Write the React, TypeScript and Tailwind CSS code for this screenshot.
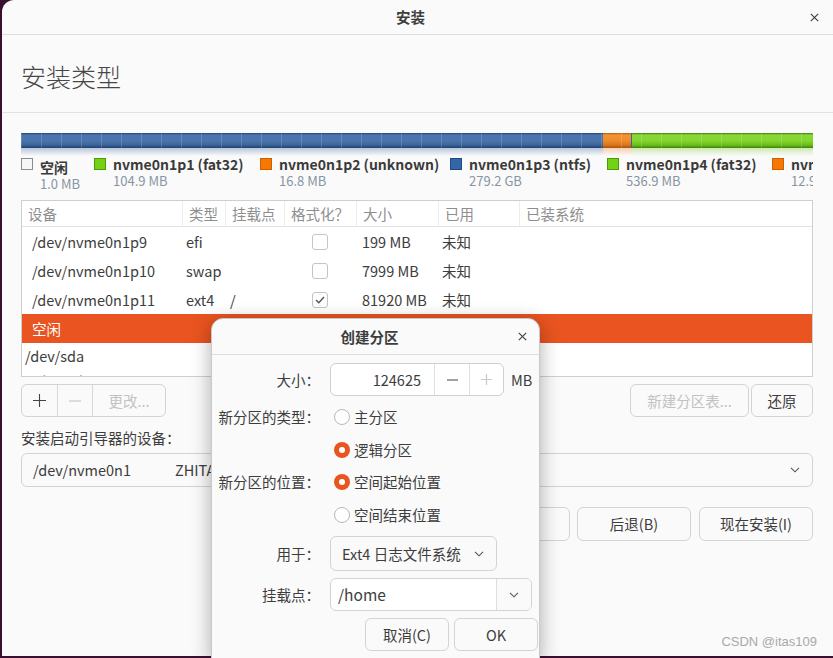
import React from 'react';

const legend = [
  { name: '空闲', size: '1.0 MB', box: 'bg-[#f6f6f6] border-[#8c8c8c]', w: 'w-[73px]', cjk: true },
  { name: 'nvme0n1p1 (fat32)', size: '104.9 MB', box: 'bg-[#73d216] border-[#4e9a06]', w: 'w-[166px]' },
  { name: 'nvme0n1p2 (unknown)', size: '16.8 MB', box: 'bg-[#f57900] border-[#ce5c00]', w: 'w-[190px]' },
  { name: 'nvme0n1p3 (ntfs)', size: '279.2 GB', box: 'bg-[#3465a4] border-[#204a87]', w: 'w-[157px]' },
  { name: 'nvme0n1p4 (fat32)', size: '536.9 MB', box: 'bg-[#73d216] border-[#4e9a06]', w: 'w-[165px]' },
  { name: 'nvme0n1p5 (ext4)', size: '12.9 GB', box: 'bg-[#f57900] border-[#ce5c00]', w: 'w-[170px]' },
];

const rows = [
  { dev: '/dev/nvme0n1p9', type: 'efi', mount: '', fmt: false, size: '199 MB', used: '未知' },
  { dev: '/dev/nvme0n1p10', type: 'swap', mount: '', fmt: false, size: '7999 MB', used: '未知' },
  { dev: '/dev/nvme0n1p11', type: 'ext4', mount: '/', fmt: true, size: '81920 MB', used: '未知' },
];

const headers = ['设备', '类型', '挂载点', '格式化？', '大小', '已用', '已装系统'];

const Chevron = () => (
  <svg width="10" height="6" viewBox="0 0 10 6" fill="none" stroke="#555" strokeWidth="1.1">
    <path d="M1 0.8l4 4 4-4" />
  </svg>
);

const CloseX = () => (
  <svg width="9" height="9" viewBox="0 0 9 9" fill="none" stroke="#444" strokeWidth="1.2">
    <path d="M0.8 0.8l7.4 7.4M8.2 0.8l-7.4 7.4" />
  </svg>
);

const Check = ({ on }: { on: boolean }) => (
  <span className="w-[16px] h-[16px] rounded-[3px] border border-[#c4c4c4] bg-white flex items-center justify-center">
    {on && (
      <svg width="10" height="8" viewBox="0 0 10 8" fill="none" stroke="#555" strokeWidth="1.4">
        <path d="M1 4l2.8 2.8L9 1" />
      </svg>
    )}
  </span>
);

const Radio = ({ on }: { on?: boolean }) =>
  on ? (
    <span className="w-[16px] h-[16px] rounded-full bg-[#e95420] flex items-center justify-center shrink-0">
      <span className="w-[6px] h-[6px] rounded-full bg-white" />
    </span>
  ) : (
    <span className="w-[16px] h-[16px] rounded-full border border-[#b8b8b8] bg-white shrink-0" />
  );

const Btn = ({ w, children, off }: { w: string; children: React.ReactNode; off?: boolean }) => (
  <div
    className={`${w} h-full flex items-center justify-center border border-[#d3d3d3] rounded-[6px] bg-[#fafafa] whitespace-nowrap ${
      off ? 'text-[#c2c2c2]' : 'text-[#3d3d3d]'
    }`}
  >
    {children}
  </div>
);

const CreateDialog = () => (
  <div className="absolute left-[211px] top-[318px] w-[329px] h-[342px] bg-[#fafafa] rounded-t-[12px] border border-[#c9c9c9] shadow-[0_4px_20px_rgba(0,0,0,0.32)] flex flex-col text-[14.5px]">
    <div className="h-[36px] shrink-0 flex items-center border-b border-[#dedede]">
      <div className="flex-1" />
      <span className="font-bold">创建分区</span>
      <div className="flex-1 flex justify-end pr-[12px]">
        <CloseX />
      </div>
    </div>
    <div className="pl-[6px] flex flex-col whitespace-nowrap">
      <div className="mt-[8px] h-[33px] flex items-center">
        <span className="w-[102px] mr-[10px] text-right">大小：</span>
        <div className="w-[174px] h-full flex border border-[#cfcfcf] rounded-[6px] bg-white overflow-hidden">
          <div className="w-[103px] flex items-center justify-end pr-[13px]">124625</div>
          <div className="w-[35px] border-l border-[#e0e0e0] flex items-center justify-center">
            <svg width="11" height="2" viewBox="0 0 11 2">
              <path d="M0 1h11" stroke="#444" strokeWidth="1.2" />
            </svg>
          </div>
          <div className="flex-1 border-l border-[#e0e0e0] flex items-center justify-center">
            <svg width="11" height="11" viewBox="0 0 11 11">
              <path d="M0 5.5h11M5.5 0v11" stroke="#c8c8c8" strokeWidth="1.2" />
            </svg>
          </div>
        </div>
        <span className="ml-[7px]">MB</span>
      </div>
      <div className="mt-[4px] h-[34px] flex items-center">
        <span className="w-[102px] mr-[14px] text-right">新分区的类型：</span>
        <Radio />
        <span className="ml-[4px]">主分区</span>
      </div>
      <div className="h-[32px] flex items-center">
        <span className="w-[102px] mr-[14px]" />
        <Radio on />
        <span className="ml-[4px]">逻辑分区</span>
      </div>
      <div className="h-[32px] flex items-center">
        <span className="w-[102px] mr-[14px] text-right">新分区的位置：</span>
        <Radio on />
        <span className="ml-[4px]">空间起始位置</span>
      </div>
      <div className="h-[34px] flex items-center">
        <span className="w-[102px] mr-[14px]" />
        <Radio />
        <span className="ml-[4px]">空间结束位置</span>
      </div>
      <div className="mt-[4px] h-[35px] flex items-center">
        <span className="w-[102px] mr-[10px] text-right">用于：</span>
        <div className="w-[167px] h-full flex items-center justify-between pl-[11px] pr-[12px] border border-[#d3d3d3] rounded-[6px] bg-[#fafafa]">
          <span>Ext4 日志文件系统</span>
          <Chevron />
        </div>
      </div>
      <div className="mt-[7px] h-[33px] flex items-center">
        <span className="w-[102px] mr-[10px] text-right">挂载点：</span>
        <div className="w-[202px] h-full flex border border-[#d3d3d3] rounded-[6px] bg-white overflow-hidden">
          <div className="flex-1 flex items-center pl-[7px] text-[15.5px]">/home</div>
          <div className="w-[35px] border-l border-[#dedede] bg-[#fafafa] flex items-center justify-center">
            <Chevron />
          </div>
        </div>
      </div>
      <div className="mt-[7px] h-[33px] flex justify-end gap-[5px] pr-[1px]">
        <Btn w="w-[84px]">取消(C)</Btn>
        <Btn w="w-[84px]">OK</Btn>
      </div>
    </div>
  </div>
);

export default function App() {
  return (
    <div className="relative w-[833px] h-[658px] overflow-hidden bg-[#3a1030] font-['Noto_Sans_CJK_SC',sans-serif] text-[#3d3d3d]">
      <div className="ml-[2px] h-[656px] bg-[#fafafa] rounded-tl-[12px] flex flex-col">
        <div className="h-[35px] shrink-0 flex items-center border-b border-[#dedede]">
          <div className="flex-1" />
          <span className="text-[14.5px] font-bold">安装</span>
          <div className="flex-1 flex justify-end pr-[14px]">
            <CloseX />
          </div>
        </div>

        <div className="h-[78px] shrink-0 flex items-center pl-[19px] pt-[6px] border-b border-[#e2e2e2]">
          <h1 className="text-[25px] font-light text-[#474747]">安装类型</h1>
        </div>

        <div className="pl-[19px] pr-[20px] flex flex-col text-[14.5px]">
          {/* partition bar */}
          <div className="mt-[20px] relative h-[15px] flex">
            <div className="w-[582px] bg-[linear-gradient(to_bottom,#1f4378_0px,#4b75ad_2px,#4a74ab_8px,#3a6399_12px,#1f416f_15px)]" />
            <div className="w-[28px] bg-[linear-gradient(to_bottom,#b85a10_0px,#f39433_2px,#ee8a2a_8px,#d9761c_12px,#a4520c_15px)]" />
            <div className="w-[1px] bg-[#3465a4]" />
            <div className="flex-1 bg-[linear-gradient(to_bottom,#3f7f08_0px,#8ad83a_2px,#82d52c_8px,#6cbf1c_12px,#3f800a_15px)]" />
            <div className="absolute inset-0 bg-[repeating-linear-gradient(90deg,rgba(255,255,255,0.16)_0px,rgba(255,255,255,0.16)_1px,transparent_1px,transparent_20px)]" />
          </div>
          <div className="h-[8px] flex">
            <div className="w-[582px] bg-[linear-gradient(to_bottom,rgba(60,100,160,0.35),rgba(60,100,160,0))]" />
            <div className="w-[29px] bg-[linear-gradient(to_bottom,rgba(240,130,40,0.35),rgba(240,130,40,0))]" />
            <div className="flex-1 bg-[linear-gradient(to_bottom,rgba(120,200,40,0.35),rgba(120,200,40,0))]" />
          </div>

          {/* legend */}
          <div className="h-[40px] flex overflow-x-clip whitespace-nowrap">
            {legend.map((l) => (
              <div key={l.name} className={`${l.w} shrink-0 flex items-start`}>
                <span className={`w-[12px] h-[12px] mt-[2px] border ${l.box} shrink-0`} />
                <div className={`ml-[7px] flex flex-col ${l.cjk ? 'mt-[3px]' : ''}`}>
                  <span className="text-[14px] font-bold leading-[16px] text-[#3a3a3a]">{l.name}</span>
                  <span className="text-[13px] leading-[17px] text-[#8795a3]">{l.size}</span>
                </div>
              </div>
            ))}
          </div>

          {/* partition table */}
          <div className="mt-[4px] h-[177px] border border-[#cfcfcf] bg-white overflow-hidden">
            <div className="h-[26px] grid grid-cols-[160px_43px_59px_72px_82px_81px_1fr] border-b border-[#e2e2e2] text-[#8e8e8e]">
              {headers.map((h, i) => (
                <div key={h} className={`flex items-center pl-[6px] ${i > 0 ? 'border-l border-[#ececec]' : ''}`}>
                  {h}
                </div>
              ))}
            </div>
            {rows.map((r) => (
              <div key={r.dev} className="h-[29px] grid grid-cols-[160px_43px_59px_72px_82px_81px_1fr] items-center">
                <span className="pl-[10px]">{r.dev}</span>
                <span className="pl-[4px]">{r.type}</span>
                <span className="pl-[5px]">{r.mount}</span>
                <span className="flex justify-center">
                  <Check on={r.fmt} />
                </span>
                <span className="pl-[6px]">{r.size}</span>
                <span className="pl-[4px]">{r.used}</span>
                <span />
              </div>
            ))}
            <div className="h-[29px] flex items-center pl-[10px] bg-[#e95420] text-white">空闲</div>
            <div className="h-[25px] flex items-center pl-[3px]">/dev/sda</div>
            <div className="h-[25px] flex items-center pl-[10px]">/dev/sda1</div>
          </div>

          {/* edit buttons */}
          <div className="mt-[7px] h-[33px] flex justify-between">
            <div className="w-[145px] h-full flex border border-[#d3d3d3] rounded-[6px] bg-[#fafafa]">
              <div className="w-[35px] flex items-center justify-center">
                <svg width="13" height="13" viewBox="0 0 13 13">
                  <path d="M0 6.5h13M6.5 0v13" stroke="#444" strokeWidth="1.1" />
                </svg>
              </div>
              <div className="w-[35px] border-l border-[#d8d8d8] flex items-center justify-center">
                <svg width="12" height="2" viewBox="0 0 12 2">
                  <path d="M0 1h12" stroke="#c4c4c4" strokeWidth="1.1" />
                </svg>
              </div>
              <div className="flex-1 border-l border-[#d8d8d8] flex items-center justify-center text-[#c2c2c2]">
                更改...
              </div>
            </div>
            <div className="flex gap-[2px] h-full">
              <Btn w="w-[119px]" off>
                新建分区表...
              </Btn>
              <Btn w="w-[62px]">还原</Btn>
            </div>
          </div>

          <div className="mt-[11px] h-[20px] leading-[20px]">安装启动引导器的设备：</div>
          <div className="mt-[5px] h-[34px] flex items-center pl-[11px] pr-[12px] border border-[#d3d3d3] rounded-[6px] bg-[#fafafa]">
            <span className="w-[142px]">/dev/nvme0n1</span>
            <span className="flex-1">ZHITAI TiPlus5000 1TB (1.0 TB)</span>
            <Chevron />
          </div>

          <div className="mt-[20px] h-[34px] flex justify-end gap-[7px]">
            <Btn w="w-[114px]">退出(Q)</Btn>
            <Btn w="w-[114px]">后退(B)</Btn>
            <div className="ml-[1px] h-full">
              <Btn w="w-[114px]">现在安装(I)</Btn>
            </div>
          </div>
        </div>
      </div>

      <CreateDialog />

      <span className="absolute right-[16px] bottom-[7px] text-[13px] font-['Liberation_Sans',sans-serif] text-[#a9a9a9]">
        CSDN @itas109
      </span>
    </div>
  );
}
